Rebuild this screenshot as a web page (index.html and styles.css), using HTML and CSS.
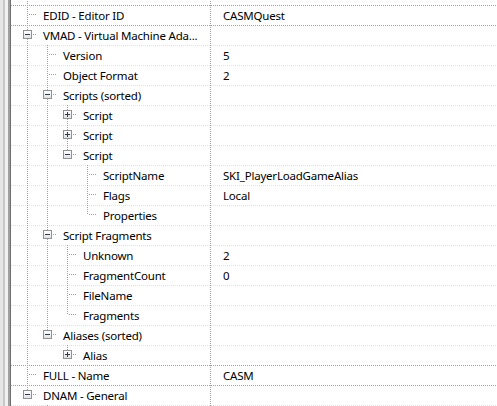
FILE: index.html
```html
<!DOCTYPE html>
<html lang="en">
<head>
  <meta charset="UTF-8">
  <title>Record view</title>
  <link rel="stylesheet" href="styles.css">
</head>
<body>
  <div class="gutter"></div>
  <div class="tree">
    <div class="row root">
      <div class="name"><i class="g line"></i></div>
      <div class="value"></div>
    </div>
    <div class="row root">
      <div class="name"><i class="g tee"></i><span class="label">EDID - Editor ID</span></div>
      <div class="value">CASMQuest</div>
    </div>
    <div class="row root">
      <div class="name"><i class="g tee"><b class="box minus"></b></i><span class="label">VMAD - Virtual Machine Ada...</span></div>
      <div class="value"></div>
    </div>
    <div class="row">
      <div class="name"><i class="g line"></i><i class="g tee"></i><span class="label">Version</span></div>
      <div class="value">5</div>
    </div>
    <div class="row">
      <div class="name"><i class="g line"></i><i class="g tee"></i><span class="label">Object Format</span></div>
      <div class="value">2</div>
    </div>
    <div class="row">
      <div class="name"><i class="g line"></i><i class="g tee"><b class="box minus"></b></i><span class="label">Scripts (sorted)</span></div>
      <div class="value"></div>
    </div>
    <div class="row">
      <div class="name"><i class="g line"></i><i class="g line"></i><i class="g tee"><b class="box plus"></b></i><span class="label">Script</span></div>
      <div class="value"></div>
    </div>
    <div class="row">
      <div class="name"><i class="g line"></i><i class="g line"></i><i class="g tee"><b class="box plus"></b></i><span class="label">Script</span></div>
      <div class="value"></div>
    </div>
    <div class="row">
      <div class="name"><i class="g line"></i><i class="g line"></i><i class="g end"><b class="box minus"></b></i><span class="label">Script</span></div>
      <div class="value"></div>
    </div>
    <div class="row">
      <div class="name"><i class="g line"></i><i class="g line"></i><i class="g"></i><i class="g tee"></i><span class="label">ScriptName</span></div>
      <div class="value">SKI_PlayerLoadGameAlias</div>
    </div>
    <div class="row">
      <div class="name"><i class="g line"></i><i class="g line"></i><i class="g"></i><i class="g tee"></i><span class="label">Flags</span></div>
      <div class="value">Local</div>
    </div>
    <div class="row">
      <div class="name"><i class="g line"></i><i class="g line"></i><i class="g"></i><i class="g end"></i><span class="label">Properties</span></div>
      <div class="value"></div>
    </div>
    <div class="row">
      <div class="name"><i class="g line"></i><i class="g tee"><b class="box minus"></b></i><span class="label">Script Fragments</span></div>
      <div class="value"></div>
    </div>
    <div class="row">
      <div class="name"><i class="g line"></i><i class="g line"></i><i class="g tee"></i><span class="label">Unknown</span></div>
      <div class="value">2</div>
    </div>
    <div class="row">
      <div class="name"><i class="g line"></i><i class="g line"></i><i class="g tee"></i><span class="label">FragmentCount</span></div>
      <div class="value">0</div>
    </div>
    <div class="row">
      <div class="name"><i class="g line"></i><i class="g line"></i><i class="g tee"></i><span class="label">FileName</span></div>
      <div class="value"></div>
    </div>
    <div class="row">
      <div class="name"><i class="g line"></i><i class="g line"></i><i class="g end"></i><span class="label">Fragments</span></div>
      <div class="value"></div>
    </div>
    <div class="row">
      <div class="name"><i class="g line"></i><i class="g end"><b class="box minus"></b></i><span class="label">Aliases (sorted)</span></div>
      <div class="value"></div>
    </div>
    <div class="row">
      <div class="name"><i class="g line"></i><i class="g"></i><i class="g end"><b class="box plus"></b></i><span class="label">Alias</span></div>
      <div class="value"></div>
    </div>
    <div class="row root">
      <div class="name"><i class="g tee"></i><span class="label">FULL - Name</span></div>
      <div class="value">CASM</div>
    </div>
    <div class="row root">
      <div class="name"><i class="g end"><b class="box minus"></b></i><span class="label">DNAM - General</span></div>
      <div class="value"></div>
    </div>
    <div class="row">
      <div class="name"><i class="g"></i><i class="g line"></i></div>
      <div class="value"></div>
    </div>
  </div>
</body>
</html>
```

FILE: styles.css
```css
body {
  margin: 0;
  height: 406px;
  overflow: hidden;
  display: flex;
  background: #fff;
  color: #000;
  font-family: "Noto Sans", "Open Sans", sans-serif;
  font-size: 11.5px;
  letter-spacing: -0.2px;
}
.gutter {
  width: 11px;
  flex: none;
  background: linear-gradient(to right, #e6e6e6 0 3px, #c8c8c8 3px 5px, #f0f0f0 5px 8px, #a0a0a0 8px 10px, #707070 10px 11px);
}
.tree {
  flex: 1;
  margin-top: -15px;
}
.row {
  display: flex;
  height: 20px;
  line-height: 21px;
  background: repeating-linear-gradient(to right, #e2e2e2 0 1px, transparent 1px 2px) 0 0 / 100% 1px no-repeat;
}
.row.root {
  background-image: repeating-linear-gradient(to right, #a0a0a0 0 1px, transparent 1px 2px);
}
.name {
  width: 199px;
  flex: none;
  display: flex;
  box-sizing: border-box;
  padding-left: 6px;
  overflow: hidden;
  white-space: nowrap;
}
.label {
  margin-left: 6px;
}
.value {
  flex: 1;
  padding-left: 13px;
  white-space: nowrap;
  background: repeating-linear-gradient(to bottom, #a0a0a0 0 1px, transparent 1px 2px) 0 0 / 1px 100% no-repeat;
}

/* tree guides */
.g {
  display: block;
  width: 20px;
  height: 20px;
  flex: none;
}
.g.line {
  background: repeating-linear-gradient(to bottom, #a0a0a0 0 1px, transparent 1px 2px) 10px 0 / 1px 20px no-repeat;
}
.g.tee {
  background:
    repeating-linear-gradient(to bottom, #a0a0a0 0 1px, transparent 1px 2px) 10px 0 / 1px 20px no-repeat,
    repeating-linear-gradient(to right, #a0a0a0 0 1px, transparent 1px 2px) 12px 9px / 12px 1px no-repeat;
}
.g.end {
  background:
    repeating-linear-gradient(to bottom, #a0a0a0 0 1px, transparent 1px 2px) 10px 0 / 1px 10px no-repeat,
    repeating-linear-gradient(to right, #a0a0a0 0 1px, transparent 1px 2px) 12px 9px / 12px 1px no-repeat;
}
.box {
  display: block;
  width: 9px;
  height: 9px;
  box-sizing: border-box;
  margin: 5px 0 0 6px;
  border: 1px solid #919191;
}
.box.minus {
  background:
    linear-gradient(#2f3a4f, #2f3a4f) 1px 3px / 5px 1px no-repeat,
    linear-gradient(#fff, #e2e2e2);
}
.box.plus {
  background:
    linear-gradient(#2f3a4f, #2f3a4f) 1px 3px / 5px 1px no-repeat,
    linear-gradient(#2f3a4f, #2f3a4f) 3px 1px / 1px 5px no-repeat,
    linear-gradient(#fff, #e2e2e2);
}
```
